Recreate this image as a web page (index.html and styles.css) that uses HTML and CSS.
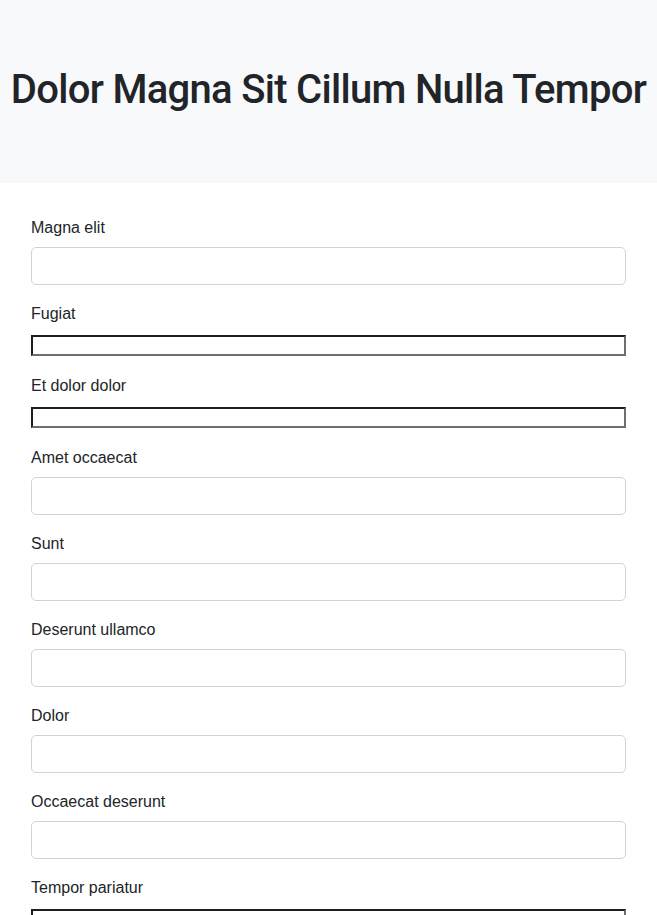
FILE: index.html
```html
<!DOCTYPE html>
<html lang="en">
<head>
<meta charset="utf-8">
<title>Form</title>
<link rel="stylesheet" href="styles.css">
</head>
<body>
<header class="hero">
  <h1 class="hero-title">Dolor Magna Sit Cillum Nulla Tempor</h1>
</header>
<main class="form-wrap">
  <div class="group">
    <label class="label" for="f1">Magna elit</label>
    <input class="control" id="f1" type="text">
  </div>
  <div class="group">
    <label class="label" for="f2">Fugiat</label>
    <input class="plain" id="f2" type="text">
  </div>
  <div class="group">
    <label class="label" for="f3">Et dolor dolor</label>
    <input class="plain" id="f3" type="text">
  </div>
  <div class="group">
    <label class="label" for="f4">Amet occaecat</label>
    <input class="control" id="f4" type="text">
  </div>
  <div class="group">
    <label class="label" for="f5">Sunt</label>
    <input class="control" id="f5" type="text">
  </div>
  <div class="group">
    <label class="label" for="f6">Deserunt ullamco</label>
    <input class="control" id="f6" type="text">
  </div>
  <div class="group">
    <label class="label" for="f7">Dolor</label>
    <input class="control" id="f7" type="text">
  </div>
  <div class="group">
    <label class="label" for="f8">Occaecat deserunt</label>
    <input class="control" id="f8" type="text">
  </div>
  <div class="group">
    <label class="label" for="f9">Tempor pariatur</label>
    <input class="plain" id="f9" type="text">
  </div>
</main>
</body>
</html>
```

FILE: styles.css
```css
* { box-sizing: border-box; }
html, body { margin: 0; padding: 0; }
body {
  background: #fff;
  color: #212529;
  font-family: "Liberation Sans", Arial, sans-serif;
  font-size: 16px;
  line-height: 1.5;
}
.hero {
  background: #f8f9fa;
  padding: 65px 0 68px;
}
.hero-title {
  margin: 0;
  text-align: center;
  font-family: Roboto, "Liberation Sans", sans-serif;
  font-size: 40px;
  font-weight: 500;
  letter-spacing: -0.7px;
  line-height: 50px;
  color: #212529;
  white-space: nowrap;
}
.form-wrap {
  padding: 32px 31px 0;
}
.group {
  display: flex;
  flex-direction: column;
  margin-bottom: 16px;
}
.label {
  display: block;
  margin-bottom: 8px;
  height: 24px;
  padding-top: 1px;
}
.control {
  display: block;
  width: 100%;
  height: 38px;
  margin: 0;
  padding: 6px 12px;
  font: inherit;
  color: #212529;
  background: #fff;
  border: 1px solid #ced4da;
  border-radius: 5px;
  outline: none;
}
.plain {
  display: block;
  width: 100%;
  height: 21px;
  margin: 2px 0 1px;
  padding: 0 2px;
  background: #fff;
  border-width: 2px;
  border-style: solid;
  border-color: #1e1e1e #6e6e6e #6e6e6e #1e1e1e;
  border-radius: 0;
  outline: none;
}
```
